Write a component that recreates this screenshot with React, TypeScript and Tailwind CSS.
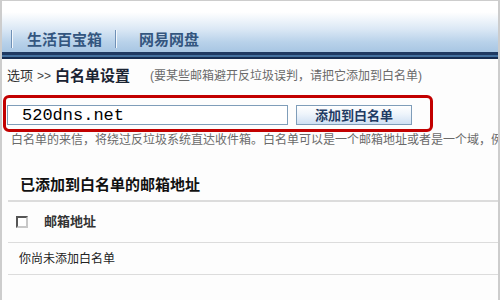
import React from 'react';

const font = "font-['Liberation_Sans','Noto_Sans_CJK_SC',sans-serif]";

const Header: React.FC = () => (
  <div className="h-[51px] pt-[25px] pl-[9px] flex items-center bg-[linear-gradient(to_bottom,#ffffff_0%,#ffffff_22%,#dbe8f5_55%,#b9d2ea_80%,#a8c6e3_100%)]">
    <div className="w-[2px] h-[18px] bg-[linear-gradient(to_right,#6f90b6_50%,#f4f8fc_50%)]" />
    <span className="ml-[14px] text-[15px] font-bold text-[#34567f] leading-none">生活百宝箱</span>
    <div className="ml-[13px] w-[2px] h-[18px] bg-[linear-gradient(to_right,#6f90b6_50%,#f4f8fc_50%)]" />
    <span className="ml-[22px] text-[15px] font-bold text-[#34567f] leading-none">网易网盘</span>
  </div>
);

export default function App() {
  return (
    <div className={`${font} w-[500px] h-[300px] overflow-hidden bg-[#fdfdfd] border-t border-l-2 border-r-2 border-[#cdcdcd]`}>
      <Header />
      <div className="h-[3px] bg-[#1f3962]" />
      <div className="h-[2px] bg-[#43709f]" />
      <div className="h-[2px] bg-[#172c50]" />

      <div className="h-[34px] flex items-center pl-[5px] text-[#333]">
        <span className="text-[13px]">选项</span>
        <span className="ml-[4px] text-[12px] text-[#444]">&gt;&gt;</span>
        <span className="ml-[4px] text-[15px] font-bold text-[#1b2433]">白名单设置</span>
        <span className="ml-[20px] text-[12px] text-[#6a6a6a]">(要某些邮箱避开反垃圾误判，请把它添加到白名单)</span>
      </div>

      <div className="mt-[2px] ml-[1px] w-[430px] h-[37px] border-[3px] border-[#c20000] rounded-[6px] flex items-start pt-[7px] pl-[1px]">
        <input
          readOnly
          value="520dns.net"
          className="w-[281px] h-[20px] border border-[#7f9db9] bg-white pl-[14px] font-['Liberation_Mono',monospace] text-[17px] leading-none text-black outline-none"
        />
        <button className="ml-[8px] w-[116px] h-[20px] border border-[#7f9db9] bg-[linear-gradient(to_bottom,#ffffff_0%,#eef4fb_45%,#cfe0f3_100%)] text-[13px] font-bold text-[#1f3b63] leading-none">
          添加到白名单
        </button>
      </div>

      <div className="h-[16px] pl-[9px] text-[12px] leading-[16px] text-[#6a6a6a] whitespace-nowrap">
        白名单的来信，将绕过反垃圾系统直达收件箱。白名单可以是一个邮箱地址或者是一个域，例
      </div>

      <div className="h-[52px] pt-[28px] pl-[18px] text-[15px] font-bold leading-[18px] text-[#111]">
        已添加到白名单的邮箱地址
      </div>

      <div className="ml-[6px] border-t-2 border-[#dcdcdc]">
        <div className="h-[41px] flex items-center border-b border-[#dcdcdc] pl-[8px]">
          <span className="w-[12px] h-[12px] border-2 border-t-[#555] border-l-[#555] border-r-[#c8c8c8] border-b-[#c8c8c8] bg-white" />
          <span className="ml-[16px] text-[13px] font-bold text-[#333]">邮箱地址</span>
        </div>
        <div className="h-[32px] flex items-center border-b border-[#dcdcdc] pl-[11px] text-[12px] text-[#222]">
          你尚未添加白名单
        </div>
      </div>
    </div>
  );
}
